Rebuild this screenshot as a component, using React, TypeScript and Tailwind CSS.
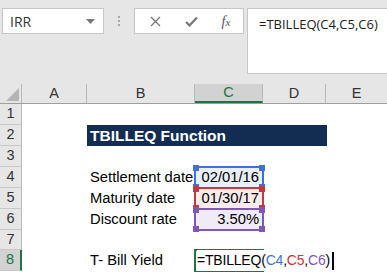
import React from "react";

const cellFont = { fontFamily: '"Liberation Sans", Arial, sans-serif' };

function Corner({ pos, color }: { pos: string; color: string }) {
  return <div className={`absolute w-[6px] h-[6px] ${pos} ${color}`} />;
}

function RefBox({ border, sq }: { border: string; sq: string }) {
  return (
    <div className={`absolute left-[-1px] right-[-1px] top-[-1px] bottom-[-1px] border-2 ${border} pointer-events-none`}>
      <Corner pos="left-[-3px] top-[-3px]" color={sq} />
      <Corner pos="right-[-3px] top-[-3px]" color={sq} />
      <Corner pos="left-[-3px] bottom-[-3px]" color={sq} />
      <Corner pos="right-[-3px] bottom-[-3px]" color={sq} />
    </div>
  );
}

const rowHeights = [21, 21, 21, 21, 21, 21, 20, 21];

export default function App() {
  return (
    <div className="w-[387px] h-[272px] overflow-hidden bg-white flex flex-col" style={cellFont}>
      {/* Toolbar */}
      <div className="h-[84px] bg-[#e6e6e6] flex items-start pt-[8px] pl-[2px] shrink-0">
        <div className="w-[102px] h-[26px] bg-white border border-[#c6c6c6] flex items-center justify-between pl-[7px] pr-[8px]">
          <span className="text-[14px] text-[#333]" style={{ fontFamily: '"Open Sans", sans-serif' }}>IRR</span>
          <svg width="9" height="5" viewBox="0 0 9 5"><path d="M0 0 L9 0 L4.5 5 Z" fill="#777" /></svg>
        </div>
        <div className="w-[30px] h-[26px] flex flex-col items-center justify-center gap-[2px]">
          <div className="w-[2px] h-[2px] bg-[#a8a8a8]" />
          <div className="w-[2px] h-[2px] bg-[#a8a8a8]" />
          <div className="w-[2px] h-[2px] bg-[#a8a8a8]" />
        </div>
        <div className="w-[110px] h-[26px] bg-white border border-[#c6c6c6] flex items-center">
          <div className="w-[38px] flex justify-center pl-[2px]">
            <svg width="11" height="11" viewBox="0 0 11 11"><path d="M1 1 L10 10 M10 1 L1 10" stroke="#777" strokeWidth="1.3" /></svg>
          </div>
          <div className="w-[36px] flex justify-center">
            <svg width="13" height="11" viewBox="0 0 13 11"><path d="M1 6 L4.5 9.5 L12 1.5" stroke="#777" strokeWidth="2.2" fill="none" /></svg>
          </div>
          <div className="w-[34px] flex justify-center">
            <span className="text-[14px] italic text-[#555]" style={{ fontFamily: '"Liberation Serif", serif' }}>f<span className="text-[11px]">x</span></span>
          </div>
        </div>
        <div className="ml-[3px] flex-1 h-[66px] bg-white border border-[#c6c6c6] border-r-0 pl-[11px] pt-[3px]">
          <span className="text-[13px] text-[#222]" style={{ fontFamily: '"Open Sans", sans-serif' }}>=TBILLEQ(C4,C5,C6)</span>
        </div>
      </div>

      {/* Column headers */}
      <div className="h-[20px] flex bg-[#e6e6e6] border-b border-[#9e9e9e] text-[14.5px] text-[#333] shrink-0">
        <div className="w-[22px] border-r border-[#b8b8b8] relative overflow-hidden">
          <svg className="absolute right-[2px] bottom-[2px]" width="13" height="13" viewBox="0 0 13 13"><path d="M13 0 L13 13 L0 13 Z" fill="#b4b4b4" /></svg>
        </div>
        <div className="w-[65px] border-r border-[#b8b8b8] flex items-center justify-center">A</div>
        <div className="w-[108px] border-r border-[#b8b8b8] flex items-center justify-center">B</div>
        <div className="w-[68px] bg-[#d2d2d2] border-r border-[#b8b8b8] border-b-2 border-b-[#217346] flex items-center justify-center text-[#217346]">C</div>
        <div className="w-[63px] border-r border-[#b8b8b8] flex items-center justify-center">D</div>
        <div className="flex-1 flex items-center justify-center">E</div>
      </div>

      {/* Rows */}
      {rowHeights.map((h, i) => {
        const r = i + 1;
        const active = r === 8;
        return (
          <div key={r} className="flex shrink-0 text-[14.75px] text-black" style={{ height: h }}>
            <div
              className={`w-[22px] shrink-0 border-b border-[#c8c8c8] flex items-center justify-center text-[14.5px] ${
                active ? "bg-[#d2d2d2] border-r-2 border-r-[#217346] text-[#217346]" : "bg-[#e6e6e6] border-r border-r-[#b8b8b8] text-[#333]"
              }`}
            >
              {r}
            </div>
            <div className="w-[65px] shrink-0" />
            {r === 2 ? (
              <div className="w-[240px] shrink-0 bg-[#132c52] text-white font-bold text-[15.5px] flex items-center pl-[3px]">TBILLEQ Function</div>
            ) : (
              <>
                <div className="w-[108px] shrink-0 flex items-center pl-[3px] whitespace-nowrap">
                  {r === 4 && "Settlement date"}
                  {r === 5 && "Maturity date"}
                  {r === 6 && "Discount rate"}
                  {r === 8 && "T- Bill Yield"}
                </div>
                {r === 4 && (
                  <div className="w-[68px] shrink-0 relative bg-[#e9eff9] flex items-center justify-end pr-[4px]">
                    02/01/16
                    <RefBox border="border-[#3f73cf]" sq="bg-[#3f73cf]" />
                  </div>
                )}
                {r === 5 && (
                  <div className="w-[68px] shrink-0 relative z-10 bg-[#fbeceb] flex items-center justify-end pr-[4px]">
                    01/30/17
                    <RefBox border="border-[#c3393d]" sq="bg-[#c3393d]" />
                  </div>
                )}
                {r === 6 && (
                  <div className="w-[68px] shrink-0 relative z-20 bg-[#f0ecf7] flex items-center justify-end pr-[4px]">
                    3.50%
                    <RefBox border="border-[#7e57b8]" sq="bg-[#7e57b8]" />
                  </div>
                )}
                {r === 8 && (
                  <div className="w-[68px] shrink-0 relative">
                    <div className="absolute left-[-1px] top-[-1px] w-[70px] h-[24px] border-2 border-[#217346]" />
                    <div className="absolute left-[2px] top-0 h-[21px] flex items-center whitespace-nowrap bg-white pr-[1px] text-[14px] tracking-[-0.2px]">
                      <span>=TBILLEQ(</span>
                      <span className="text-[#3f73cf]">C4</span>
                      <span>,</span>
                      <span className="text-[#c3393d]">C5</span>
                      <span>,</span>
                      <span className="text-[#7e57b8]">C6</span>
                      <span>)</span>
                      <span className="inline-block w-[2px] h-[18px] bg-black ml-[2px]" />
                    </div>
                  </div>
                )}
              </>
            )}
          </div>
        );
      })}
    </div>
  );
}
